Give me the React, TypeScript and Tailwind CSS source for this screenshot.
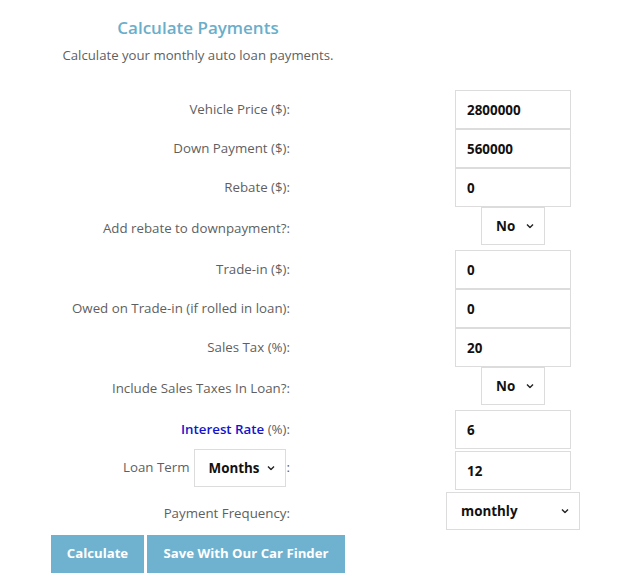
import React from 'react';

const Chevron: React.FC = () => (
  <svg
    className="pointer-events-none absolute right-[11px] top-1/2 -translate-y-1/2"
    width="8"
    height="5"
    viewBox="0 0 8 5"
    fill="none"
  >
    <path d="M1 1 L4 4 L7 1" stroke="#222" strokeWidth="1.4" />
  </svg>
);

interface SelectBoxProps {
  value: string;
  options: string[];
  className: string;
}

const SelectBox: React.FC<SelectBoxProps> = ({ value, options, className }) => (
  <div className={`relative ${className}`}>
    <select
      defaultValue={value}
      className="h-full w-full appearance-none border border-[#dcdcdc] bg-white pl-[14px] text-[13.4px] font-bold text-[#111] outline-none"
    >
      {options.map((o) => (
        <option key={o}>{o}</option>
      ))}
    </select>
    <Chevron />
  </div>
);

const TextBox: React.FC<{ value: string }> = ({ value }) => (
  <input
    defaultValue={value}
    className="h-[39px] w-[116px] border border-[#dcdcdc] bg-white pl-[11px] text-[13.4px] font-bold text-[#111] outline-none"
  />
);

interface RowProps {
  label: React.ReactNode;
  height: string;
  children: React.ReactNode;
}

const Row: React.FC<RowProps> = ({ label, height, children }) => (
  <div className={`flex ${height}`}>
    <div className="flex w-[290px] items-center justify-end text-right text-[13.3px] text-[#5f5f5f]">
      {label}
    </div>
    <div className="ml-[156px] flex w-[134px] items-start justify-center">{children}</div>
  </div>
);

export default function App() {
  return (
    <div className="min-h-[583px] bg-white" style={{ fontFamily: '"Open Sans", "Liberation Sans", sans-serif' }}>
      <div className="w-[396px] pt-[15px] text-center">
        <h2 className="text-[17px] font-semibold leading-[26px] text-[#6aaeca]">Calculate Payments</h2>
        <p className="mt-[2px] text-[13.2px] leading-[24px] text-[#5f5f5f]">Calculate your monthly auto loan payments.</p>
      </div>

      <div className="mt-[23px] flex flex-col">
        <Row label="Vehicle Price ($):" height="h-[39px]">
          <TextBox value="2800000" />
        </Row>
        <Row label="Down Payment ($):" height="h-[39px]">
          <TextBox value="560000" />
        </Row>
        <Row label="Rebate ($):" height="h-[39px]">
          <TextBox value="0" />
        </Row>
        <Row label="Add rebate to downpayment?:" height="h-[43px]">
          <SelectBox value="No" options={['No', 'Yes']} className="h-[38px] w-[64px]" />
        </Row>
        <Row label="Trade-in ($):" height="h-[39px]">
          <TextBox value="0" />
        </Row>
        <Row label="Owed on Trade-in (if rolled in loan):" height="h-[39px]">
          <TextBox value="0" />
        </Row>
        <Row label="Sales Tax (%):" height="h-[39px]">
          <TextBox value="20" />
        </Row>
        <Row label="Include Sales Taxes In Loan?:" height="h-[43px]">
          <SelectBox value="No" options={['No', 'Yes']} className="h-[38px] w-[64px]" />
        </Row>
        <Row
          label={
            <span className="-mt-[2px]">
              <a className="font-semibold text-[#1414cc]">Interest Rate</a> (%):
            </span>
          }
          height="h-[41px]"
        >
          <TextBox value="6" />
        </Row>
        <Row
          label={
            <span className="-mt-[7px] flex items-center">
              <span className="mr-[4px]">Loan Term</span>
              <SelectBox value="Months" options={['Months', 'Years']} className="h-[38px] w-[92px]" />
              <span className="ml-[1px]">:</span>
            </span>
          }
          height="h-[41px]"
        >
          <TextBox value="12" />
        </Row>
        <Row label="Payment Frequency:" height="h-[43px]">
          <SelectBox
            value="monthly"
            options={['monthly', 'bi-weekly', 'weekly']}
            className="h-[38px] w-[134px]"
          />
        </Row>

        <div className="flex gap-[3px] pl-[51px]">
          <button className="h-[38px] w-[93px] bg-[#6fb2cf] text-[13.2px] font-bold text-white">Calculate</button>
          <button className="h-[38px] w-[198px] bg-[#6fb2cf] text-[13.2px] font-bold text-white">
            Save With Our Car Finder
          </button>
        </div>
      </div>
    </div>
  );
}
